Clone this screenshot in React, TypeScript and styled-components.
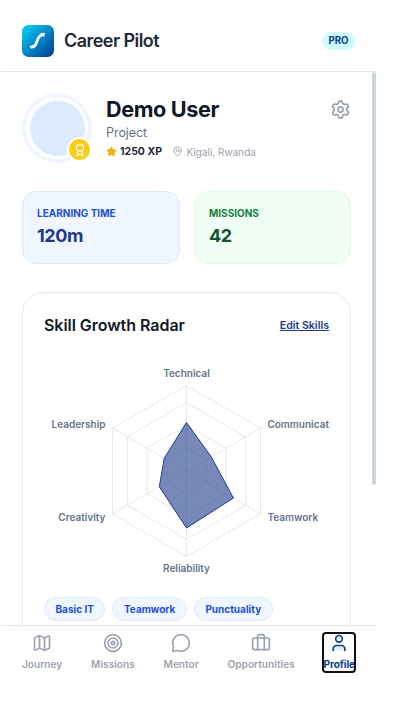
import React from 'react';
import styled, { createGlobalStyle } from 'styled-components';
import {
  Award,
  Briefcase,
  Map as MapIcon,
  MapPin,
  MessageCircle,
  Settings,
  Star,
  Target,
  User,
} from 'lucide-react';

const GlobalStyle = createGlobalStyle`
  *, *::before, *::after { box-sizing: border-box; }
  body {
    margin: 0;
    background: #fff;
    color: #111827;
    font-family: Inter, sans-serif;
    overflow: hidden;
  }
  button { font: inherit; padding: 0; border: 0; background: none; }
  h1, h2, p { margin: 0; }
`;

const Shell = styled.div`
  width: 375px;
  height: 702px;
  margin-left: 1px;
  display: flex;
  flex-direction: column;
  background: #fff;
`;

const Header = styled.header`
  height: 72px;
  flex: none;
  display: flex;
  align-items: center;
  justify-content: space-between;
  padding: 10px 21px 0;
  border-bottom: 1px solid #e5e7eb;
`;

const Brand = styled.div`
  display: flex;
  align-items: center;
  gap: 10px;
`;

const BrandName = styled.span`
  font-size: 18px;
  line-height: 25px;
  font-weight: 600;
  letter-spacing: -0.55px;
  color: #1f2937;
`;

const Plan = styled.span`
  height: 18px;
  padding: 0 6.5px;
  border-radius: 9px;
  background: #cffafe;
  color: #084290;
  font-size: 9.7px;
  line-height: 18px;
  font-weight: 700;
`;

const Body = styled.div`
  height: 553px;
  flex: none;
  display: flex;
  overflow: hidden;
`;

const Content = styled.main`
  width: 371px;
  flex: none;
  padding: 21px 21px 0;
`;

const ScrollThumb = styled.div`
  width: 4px;
  height: 413px;
  border-radius: 2px;
  background: #cbd5e1;
`;

const ProfileRow = styled.section`
  display: flex;
  height: 70px;
`;

const Avatar = styled.div`
  position: relative;
  width: 70px;
  height: 70px;
  flex: none;
  border-radius: 50%;
  border: 4px solid #eff6ff;
  padding: 3.5px;
  background: #fff;
`;

const AvatarFill = styled.div`
  width: 55px;
  height: 55px;
  border-radius: 50%;
  background: #dbeafe;
`;

const AvatarBadge = styled.div`
  position: absolute;
  right: -4px;
  bottom: -3px;
  width: 25px;
  height: 25px;
  display: grid;
  place-items: center;
  border: 2px solid #fff;
  border-radius: 50%;
  background: #facc15;
  color: #fff;
`;

const Identity = styled.div`
  flex: 1;
  padding: 2px 0 0 14px;
`;

const UserName = styled.h1`
  font-size: 21.6px;
  line-height: 28px;
  font-weight: 700;
  letter-spacing: -0.36px;
  color: #111827;
`;

const Role = styled.p`
  margin-top: 0.5px;
  font-size: 12.6px;
  line-height: 18px;
  letter-spacing: -0.1px;
  color: #6b7280;
`;

const Meta = styled.div`
  display: flex;
  align-items: center;
  height: 15px;
  margin-top: 2.5px;
`;

const Points = styled.span`
  margin: 0 10px 0 3px;
  font-size: 10.5px;
  font-weight: 700;
  color: #1f2937;
`;

const Place = styled.span`
  margin-left: 3.5px;
  padding-top: 1px;
  font-size: 10px;
  color: #9ca3af;
`;

const SettingsButton = styled.button`
  align-self: flex-start;
  margin-top: 6px;
  height: 22px;
  color: #9ca3af;
`;

const Stats = styled.section`
  display: grid;
  grid-template-columns: 158px 157px;
  gap: 14px;
  margin-top: 28px;
`;

type Tone = 'blue' | 'green';
const tones = {
  blue: { bg: '#eff6ff', line: '#dbeafe', label: '#1d4ed8', value: '#1e3a8a' },
  green: { bg: '#f0fdf4', line: '#dcfce7', label: '#15803d', value: '#14532d' },
};

const StatCard = styled.div<{ $tone: Tone }>`
  height: 73px;
  padding: 14px;
  border: 1px solid ${(p) => tones[p.$tone].line};
  border-radius: 14px;
  background: ${(p) => tones[p.$tone].bg};
`;

const StatLabel = styled.p<{ $tone: Tone }>`
  font-size: 10px;
  line-height: 15px;
  font-weight: 700;
  color: ${(p) => tones[p.$tone].label};
`;

const StatValue = styled.p<{ $tone: Tone }>`
  margin-top: 2px;
  font-size: 18px;
  line-height: 25px;
  font-weight: 700;
  letter-spacing: -0.4px;
  color: ${(p) => tones[p.$tone].value};
`;

const SkillCard = styled.section`
  height: 420px;
  margin-top: 28px;
  padding: 20px 21px;
  border: 1px solid #e5e7eb;
  border-radius: 21px;
`;

const CardHead = styled.div`
  display: flex;
  align-items: center;
  justify-content: space-between;
  height: 24px;
`;

const CardTitle = styled.h2`
  font-size: 16px;
  line-height: 24px;
  font-weight: 600;
  letter-spacing: -0.04px;
`;

const EditButton = styled.button`
  margin-top: 2px;
  font-size: 10.6px;
  line-height: 14px;
  font-weight: 600;
  color: #1e3a8a;
  text-decoration: underline;
`;

const Radar = styled.svg`
  display: block;
  width: 285px;
  height: 225px;
  margin-top: 23px;
  overflow: hidden;

  text {
    font-size: 10px;
    font-weight: 600;
    fill: #64748b;
  }
`;

const Tags = styled.div`
  display: flex;
  gap: 7px;
  margin-top: 12px;
`;

const Tag = styled.span`
  height: 24px;
  padding: 0 10.5px;
  border: 1px solid #dbeafe;
  border-radius: 12px;
  background: #eff6ff;
  color: #1d4ed8;
  font-size: 10px;
  line-height: 23px;
  font-weight: 700;
`;

const Nav = styled.nav`
  height: 77px;
  flex: none;
  display: flex;
  align-items: flex-start;
  justify-content: space-between;
  padding: 7px 21px 0;
  border-top: 1px solid #e5e7eb;
`;

const NavItem = styled.button<{ $active?: boolean }>`
  display: flex;
  flex-direction: column;
  align-items: center;
  justify-content: flex-start;
  gap: 4px;
  height: 39px;
  font-size: 10.1px;
  line-height: 14px;
  font-weight: ${(p) => (p.$active ? 700 : 600)};
  letter-spacing: ${(p) => (p.$active ? '-0.1px' : '0.02px')};
  color: ${(p) => (p.$active ? '#084290' : '#9ca3af')};
  outline: ${(p) => (p.$active ? '2px solid #101010' : 'none')};
  outline-offset: -1px;
  border-radius: 3px;
`;

const Logo = () => (
  <svg width="32" height="32" viewBox="0 0 32 32">
    <defs>
      <linearGradient id="brand" x1="0" y1="0" x2="1" y2="1">
        <stop offset="0" stopColor="#00d4ff" />
        <stop offset="1" stopColor="#003b8e" />
      </linearGradient>
    </defs>
    <rect width="32" height="32" rx="6.5" fill="url(#brand)" />
    <path d="M9.3 22C16.5 22.5 13.5 10.5 20.7 9.7" fill="none" stroke="#fff" strokeWidth="2.8" strokeLinecap="round" />
    <path d="M18.7 8.6L22.5 8.2L21.7 12.2" fill="#fff" stroke="#fff" strokeWidth=".8" strokeLinejoin="round" />
  </svg>
);

const CX = 142.5;
const CY = 111;
const RADIUS = 85.5;
const MAX = 150;

const skills = [
  { name: 'Technical', value: 85, x: 142.5, y: 17, anchor: 'middle' },
  { name: 'Communicat', value: 50, x: 223.4, y: 68, anchor: 'start' },
  { name: 'Teamwork', value: 95, x: 223.4, y: 161, anchor: 'start' },
  { name: 'Reliability', value: 100, x: 142.5, y: 212, anchor: 'middle' },
  { name: 'Creativity', value: 55, x: 61.5, y: 161, anchor: 'end' },
  { name: 'Leadership', value: 45, x: 61.5, y: 68, anchor: 'end' },
] as const;

const point = (value: number, i: number) => {
  const angle = (i * Math.PI) / 3 - Math.PI / 2;
  const r = (value / MAX) * RADIUS;
  return [CX + r * Math.cos(angle), CY + r * Math.sin(angle)];
};
const ring = (values: number[]) => values.map((v, i) => point(v, i).join(',')).join(' ');

const SkillRadar = () => (
  <Radar viewBox="0 0 285 225">
    {[40, 80, 120, 150].map((level) => (
      <polygon key={level} points={ring(Array(6).fill(level))} fill="none" stroke="#e2e8f0" />
    ))}
    {skills.map((s, i) => {
      const [x, y] = point(MAX, i);
      return <line key={s.name} x1={CX} y1={CY} x2={x} y2={y} stroke="#e2e8f0" />;
    })}
    <polygon points={ring(skills.map((s) => s.value))} fill="#1e3a8a" fillOpacity="0.6" stroke="#1e3a8a" />
    {skills.map((s) => (
      <text key={s.name} x={s.x} y={s.y} textAnchor={s.anchor}>
        {s.name}
      </text>
    ))}
  </Radar>
);

const navItems = [
  { label: 'Journey', Icon: MapIcon },
  { label: 'Missions', Icon: Target },
  { label: 'Mentor', Icon: MessageCircle },
  { label: 'Opportunities', Icon: Briefcase },
  { label: 'Profile', Icon: User, active: true },
];

export default function App() {
  return (
    <>
      <GlobalStyle />
      <Shell>
        <Header>
          <Brand>
            <Logo />
            <BrandName>Career Pilot</BrandName>
          </Brand>
          <Plan>PRO</Plan>
        </Header>
        <Body>
          <Content>
            <ProfileRow>
              <Avatar>
                <AvatarFill />
                <AvatarBadge>
                  <Award size={14} />
                </AvatarBadge>
              </Avatar>
              <Identity>
                <UserName>Demo User</UserName>
                <Role>Project</Role>
                <Meta>
                  <Star size={11} color="#eab308" fill="#eab308" />
                  <Points>1250 XP</Points>
                  <MapPin size={11} color="#9ca3af" />
                  <Place>Kigali, Rwanda</Place>
                </Meta>
              </Identity>
              <SettingsButton aria-label="Settings">
                <Settings size={21} />
              </SettingsButton>
            </ProfileRow>
            <Stats>
              <StatCard $tone="blue">
                <StatLabel $tone="blue">LEARNING TIME</StatLabel>
                <StatValue $tone="blue">120m</StatValue>
              </StatCard>
              <StatCard $tone="green">
                <StatLabel $tone="green">MISSIONS</StatLabel>
                <StatValue $tone="green">42</StatValue>
              </StatCard>
            </Stats>
            <SkillCard>
              <CardHead>
                <CardTitle>Skill Growth Radar</CardTitle>
                <EditButton>Edit Skills</EditButton>
              </CardHead>
              <SkillRadar />
              <Tags>
                <Tag>Basic IT</Tag>
                <Tag>Teamwork</Tag>
                <Tag>Punctuality</Tag>
              </Tags>
            </SkillCard>
          </Content>
          <ScrollThumb />
        </Body>
        <Nav>
          {navItems.map(({ label, Icon, active }) => (
            <NavItem key={label} $active={active}>
              <Icon size={20} fill={active ? 'rgba(8, 66, 144, 0.1)' : 'none'} />
              {label}
            </NavItem>
          ))}
        </Nav>
      </Shell>
    </>
  );
}
